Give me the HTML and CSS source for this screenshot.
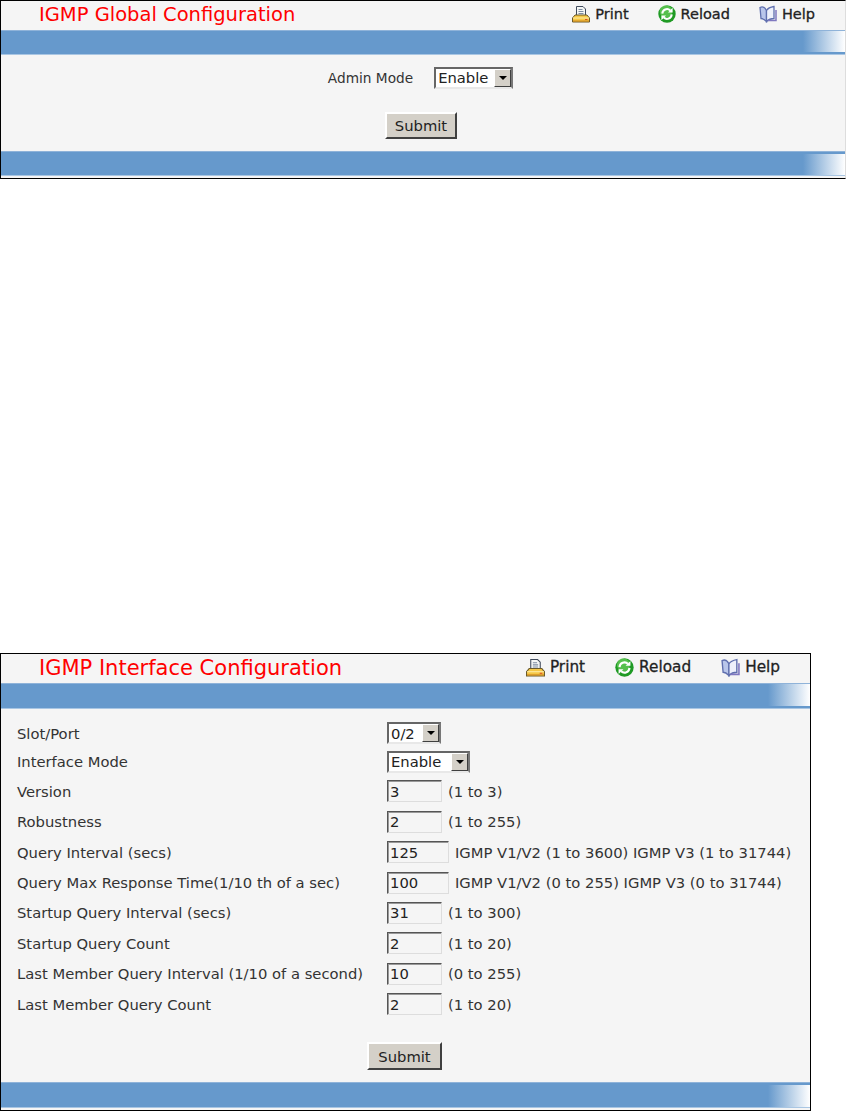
FILE: index.html
```html
<!DOCTYPE html>
<html lang="en">
<head>
<meta charset="utf-8">
<title>IGMP Configuration</title>
<link rel="stylesheet" href="styles.css">
</head>
<body>
<svg class="defs" width="0" height="0" aria-hidden="true">
  <symbol id="i-print" viewBox="0 0 18 18">
    <path d="M4.500 1.500h6.500l2.500 2.500v7h-9z" fill="#f4f6f4" stroke="#3f4a5c"/>
    <path d="M6.500 4.500h4M6.500 6.500h5M6.500 8.500h5" stroke="#7d8ca0"/>
    <path d="M3 10h12l2.500 3v4H.5v-4z" fill="#f6c845" stroke="#6b5a2a"/>
    <path d="M1 13h16" stroke="#fdeea8"/>
    <path d="M1 16h16" stroke="#d08a20"/>
    <path d="M13 14.500h2.500" stroke="#d9502a"/>
  </symbol>
  <symbol id="i-reload" viewBox="0 0 18 18">
    <circle cx="9" cy="9" r="8.700" fill="#1f9a24"/>
    <circle cx="8" cy="6.500" r="6.200" fill="#79d868" opacity=".6"/>
    <path d="M4.300 8.600A4.700 4.700 0 0 1 12.200 5.400" fill="none" stroke="#fff" stroke-width="2"/>
    <path d="M10 7.400h4.600V2.800z" fill="#fff"/>
    <path d="M13.700 9.400A4.700 4.700 0 0 1 5.800 12.600" fill="none" stroke="#fff" stroke-width="2"/>
    <path d="M8 10.600H3.400v4.600z" fill="#fff"/>
  </symbol>
  <symbol id="i-help" viewBox="0 0 18 18">
    <path d="M1 2.500c3-1.500 5 0 6.500 3v11c-2-2-3.500-3-5.500-3z" fill="#b9c6ea" stroke="#5f6fae" stroke-width="1.300"/>
    <path d="M15 1.500c-3 .5-6 1.500-7.500 4v11c2-2 4.500-3 7.500-3z" fill="#eef1fb" stroke="#5f6fae" stroke-width="1.300"/>
    <path d="M17 5v10.500H9" fill="none" stroke="#7f78c0" stroke-width="1.500"/>
  </symbol>
</svg>

<section class="panel panel-global">
  <header class="head">
    <h1 class="title">IGMP Global Configuration</h1>
    <nav class="tools">
      <a class="tool"><svg class="ico"><use href="#i-print"/></svg>Print</a>
      <a class="tool"><svg class="ico"><use href="#i-reload"/></svg>Reload</a>
      <a class="tool"><svg class="ico"><use href="#i-help"/></svg>Help</a>
    </nav>
  </header>
  <div class="bar bar-top"></div>
  <div class="body body-global">
    <div class="admin">
      <span class="admin-label">Admin Mode</span>
      <span class="sel sel-admin"><select><option>Enable</option></select><span class="arrow"></span></span>
    </div>
    <button class="btn btn-global" type="button">Submit</button>
  </div>
  <div class="bar bar-bottom"></div>
</section>

<section class="panel panel-iface">
  <header class="head">
    <h1 class="title">IGMP Interface Configuration</h1>
    <nav class="tools">
      <a class="tool"><svg class="ico"><use href="#i-print"/></svg>Print</a>
      <a class="tool"><svg class="ico"><use href="#i-reload"/></svg>Reload</a>
      <a class="tool"><svg class="ico"><use href="#i-help"/></svg>Help</a>
    </nav>
  </header>
  <div class="bar bar-top"></div>
  <div class="body body-iface">
    <div class="form">
      <div class="row row-sel"><label>Slot/Port</label><span class="sel sel-port"><select><option>0/2</option></select><span class="arrow"></span></span></div>
      <div class="row row-sel"><label>Interface Mode</label><span class="sel sel-mode"><select><option>Enable</option></select><span class="arrow"></span></span></div>
      <div class="row"><label>Version</label><input class="in" value="3"><span class="hint">(1 to 3)</span></div>
      <div class="row"><label>Robustness</label><input class="in" value="2"><span class="hint">(1 to 255)</span></div>
      <div class="row"><label>Query Interval (secs)</label><input class="in in-wide" value="125"><span class="hint">IGMP V1/V2 (1 to 3600) IGMP V3 (1 to 31744)</span></div>
      <div class="row"><label>Query Max Response Time(1/10 th of a sec)</label><input class="in in-wide" value="100"><span class="hint">IGMP V1/V2 (0 to 255) IGMP V3 (0 to 31744)</span></div>
      <div class="row"><label>Startup Query Interval (secs)</label><input class="in" value="31"><span class="hint">(1 to 300)</span></div>
      <div class="row"><label>Startup Query Count</label><input class="in" value="2"><span class="hint">(1 to 20)</span></div>
      <div class="row"><label>Last Member Query Interval (1/10 of a second)</label><input class="in" value="10"><span class="hint">(0 to 255)</span></div>
      <div class="row"><label>Last Member Query Count</label><input class="in" value="2"><span class="hint">(1 to 20)</span></div>
    </div>
    <button class="btn btn-iface" type="button">Submit</button>
  </div>
  <div class="bar bar-bottom"></div>
</section>
</body>
</html>
```
FILE: styles.css
```css
* { box-sizing: border-box; }
html, body { margin: 0; padding: 0; background: #fff; }
body {
  width: 847px;
  height: 1111px;
  overflow: hidden;
  font-family: "DejaVu Sans", Verdana, sans-serif;
  font-size: 14.75px;
  color: #333;
}
.defs { display: block; height: 0; }

.panel {
  display: flex;
  flex-direction: column;
  background: #f5f5f5;
  border: 1px solid #000;
  padding-bottom: 2px;
}
.panel-global { width: 846px; height: 179px; border-right-color: #ddd; }
.panel-iface { width: 811px; height: 458px; margin-top: 474px; }

.head {
  height: 29px;
  flex: none;
  display: flex;
  align-items: center;
  justify-content: space-between;
  padding-bottom: 2px;
}
.title {
  margin: 0 0 0 38px;
  font-weight: 400;
  color: #f00;
}
.panel-global .title { font-size: 19.5px; }
.panel-iface .title { font-size: 21px; }
.tools { display: flex; align-items: center; margin-bottom: 1px; }
.panel-global .tools { margin-right: 30px; gap: 29px; }
.panel-iface .tools { margin-right: 30px; gap: 30px; }
.tool {
  display: flex;
  align-items: center;
  gap: 5px;
  font-size: 14.5px;
  color: #222;
  -webkit-text-stroke: 0.3px #222;
}
.panel-iface .tool { font-size: 15.3px; }
.ico { width: 18px; height: 18px; flex: none; }
.panel-iface .ico { width: 19px; height: 19px; }

.bar {
  flex: none;
  background: linear-gradient(90deg, #6699cc calc(100% - 42px), #fff 100%);
}
.panel-global .bar { height: 24px; }
.panel-iface .bar { height: 25px; }
.bar-top {
  border-top: 1px solid #8fb3d9;
  border-bottom: 2px solid #6699cc;
  box-shadow: 0 1px 0 #a9c6e3;
}
.bar-bottom {
  border-top: 2px solid #6699cc;
  border-bottom: 1px solid #a9c6e3;
  box-shadow: 0 -1px 0 #8fb3d9;
}

.body { flex: 1; display: flex; flex-direction: column; }
.body-global { align-items: center; }
.admin {
  display: flex;
  align-items: center;
  gap: 21px;
  margin-top: 12px;
  margin-right: 5px;
  height: 23px;
}
.admin-label { font-size: 13.7px; }
.btn {
  font: inherit;
  color: #222;
  background: #d4d0c8;
  border: 2px solid;
  border-color: #fff #404040 #404040 #fff;
  padding: 0;
}
.btn-global { width: 72px; height: 27px; margin-top: 23px; margin-right: 4px; }
.btn-iface { width: 75px; height: 28px; margin-top: 23px; margin-left: 366px; }

.sel {
  display: inline-flex;
  height: 22px;
  background: #fff;
  border: 2px solid;
  border-color: #666 #777 #e8e8e8 #666;
}
.sel select {
  flex: 1;
  min-width: 0;
  appearance: none;
  border: 0;
  border-radius: 0;
  background: #fff;
  font: inherit;
  color: #222;
  padding: 0 0 0 2px;
}
.arrow {
  width: 17px;
  flex: none;
  background: #d4d0c8;
  border: 1px solid;
  border-color: #fff #404040 #404040 #fff;
  display: flex;
  align-items: center;
  justify-content: center;
}
.arrow::after {
  content: "";
  border: 4px solid transparent;
  border-top-color: #000;
  border-bottom-width: 0;
}
.sel-admin { width: 79px; }
.sel-port { width: 54px; }
.sel-mode { width: 83px; }

.form { padding: 11px 0 0 16px; }
.row { display: flex; align-items: center; height: 30.4px; }
.row-sel { height: 28.6px; }
.row label { width: 370px; flex: none; white-space: nowrap; }
.in {
  width: 55px;
  height: 22px;
  flex: none;
  font: inherit;
  color: #222;
  background: #f5f5f5;
  border: 1px solid;
  border-color: #555 #ddd #ddd #555;
  box-shadow: inset 1px 1px 0 #999;
  padding: 0 0 0 2px;
}
.in-wide { width: 62px; }
.hint { margin-left: 6px; white-space: nowrap; }
```
